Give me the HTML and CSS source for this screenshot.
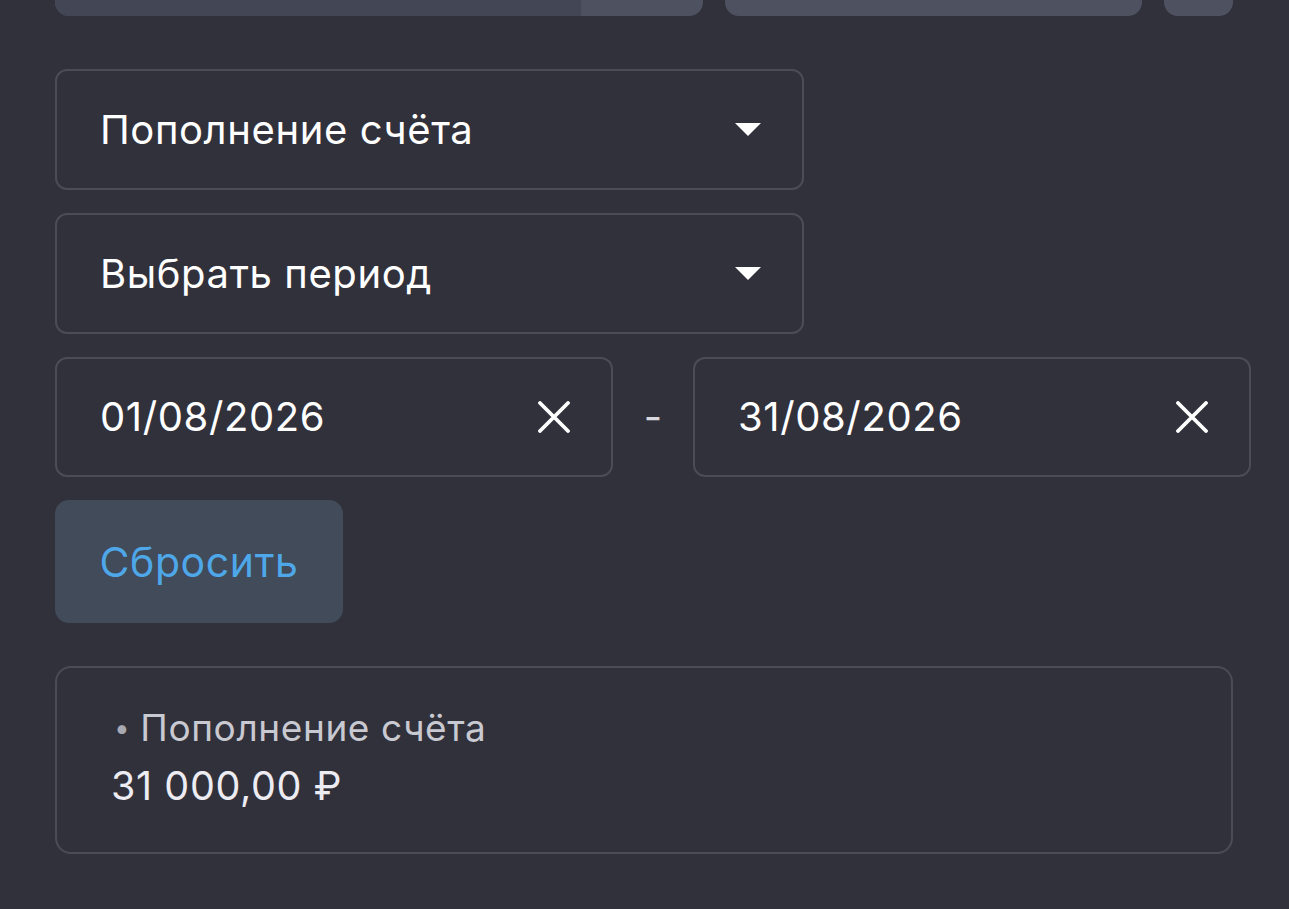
FILE: index.html
```html
<!DOCTYPE html>
<html lang="ru">
<head>
<meta charset="utf-8">
<link rel="stylesheet" href="styles.css">
</head>
<body>
<div class="page">
  <div class="tabs">
    <div class="tab tab-progress"><div class="tab-fill"></div></div>
    <div class="tab tab-mid"></div>
    <div class="tab tab-small"></div>
  </div>

  <div class="filters">
    <div class="select">
      <span class="select-text">Пополнение счёта</span>
      <svg class="caret" width="26" height="13" viewBox="0 0 26 13"><path d="M0 0 H26 L13 13 Z" fill="#ffffff"/></svg>
    </div>
    <div class="select">
      <span class="select-text">Выбрать период</span>
      <svg class="caret" width="26" height="13" viewBox="0 0 26 13"><path d="M0 0 H26 L13 13 Z" fill="#ffffff"/></svg>
    </div>
    <div class="dates">
      <div class="date">
        <span class="date-text">01/08/2026</span>
        <svg class="clear" width="32" height="32" viewBox="0 0 32 32"><path d="M2 2 L30 30 M30 2 L2 30" stroke="#ffffff" stroke-width="3.8" stroke-linecap="round"/></svg>
      </div>
      <span class="dash">-</span>
      <div class="date">
        <span class="date-text">31/08/2026</span>
        <svg class="clear" width="32" height="32" viewBox="0 0 32 32"><path d="M2 2 L30 30 M30 2 L2 30" stroke="#ffffff" stroke-width="3.8" stroke-linecap="round"/></svg>
      </div>
    </div>
    <button class="reset">Сбросить</button>
  </div>

  <div class="summary">
    <div class="summary-label"><span class="bullet">•</span>Пополнение счёта</div>
    <div class="summary-value">31 000,00 ₽</div>
  </div>
</div>
</body>
</html>
```

FILE: styles.css
```css
* { box-sizing: border-box; }
html, body {
  margin: 0;
  padding: 0;
  background: #31313b;
}
body {
  font-family: Inter, "Noto Sans", "Liberation Sans", sans-serif;
  color: #ffffff;
}
.page {
  padding: 0 39px 0 55px;
  width: 1289px;
}
.tabs {
  display: flex;
  gap: 22px;
  width: 1178px;
}
.tab {
  height: 16px;
  border-radius: 0 0 14px 14px;
  background: #4e5160;
  overflow: hidden;
}
.tab-progress { width: 648px; }
.tab-fill { width: 526px; height: 100%; background: #434654; }
.tab-mid { width: 417px; }
.tab-small { width: 69px; }

.filters {
  margin-top: 53px;
  display: flex;
  flex-direction: column;
  gap: 23px;
  align-items: flex-start;
}
.select {
  width: 749px;
  height: 121px;
  border: 2px solid #4a4c57;
  border-radius: 12px;
  display: flex;
  align-items: center;
  justify-content: space-between;
  padding: 0 41px 0 43px;
}
.select-text, .date-text {
  font-size: 40px;
  letter-spacing: 0.6px;
  line-height: 1;
}
.caret { display: block; }
.dates {
  display: flex;
  align-items: center;
  width: 1196px;
}
.date {
  width: 558px;
  height: 120px;
  border: 2px solid #4a4c57;
  border-radius: 12px;
  display: flex;
  align-items: center;
  justify-content: space-between;
  padding: 0 41px 0 43px;
}
.dash {
  flex: 1;
  text-align: center;
  font-size: 40px;
  line-height: 1;
  color: #d8d8de;
}
.reset {
  width: 288px;
  height: 123px;
  border: none;
  border-radius: 14px;
  background: #414b59;
  color: #4ea7e8;
  font-family: inherit;
  font-size: 41px;
  letter-spacing: 0.6px;
  padding: 0;
}
.summary {
  margin-top: 43px;
  width: 1178px;
  height: 188px;
  border: 2px solid #4a4c57;
  border-radius: 16px;
  padding: 38px 54px 0 54px;
}
.summary-label {
  color: #c9c9d1;
  font-size: 37px;
  letter-spacing: 0.6px;
  line-height: 44px;
  display: flex;
  align-items: center;
}
.bullet {
  font-size: 28px;
  margin: 0 10px 0 3px;
  color: #a9a9b3;
}
.summary-value {
  color: #ececf2;
  font-size: 39.5px;
  letter-spacing: 0.6px;
  line-height: 44px;
  margin-top: 14px;
}
```
